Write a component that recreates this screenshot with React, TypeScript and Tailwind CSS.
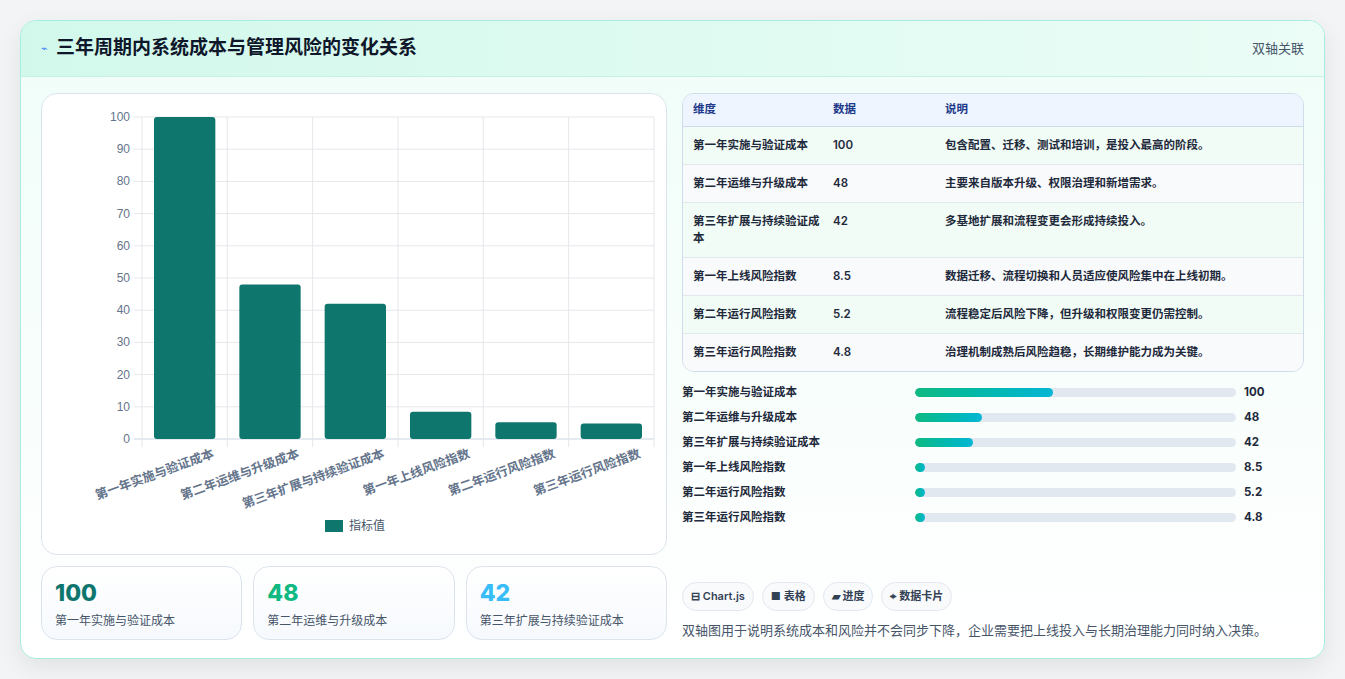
import React from "react";

const cats = ["第一年实施与验证成本","第二年运维与升级成本","第三年扩展与持续验证成本","第一年上线风险指数","第二年运行风险指数","第三年运行风险指数"];
const vals = [100,48,42,8.5,5.2,4.8];
const rows = [
  ["第一年实施与验证成本","100","包含配置、迁移、测试和培训，是投入最高的阶段。"],
  ["第二年运维与升级成本","48","主要来自版本升级、权限治理和新增需求。"],
  ["第三年扩展与持续验证成本","42","多基地扩展和流程变更会形成持续投入。"],
  ["第一年上线风险指数","8.5","数据迁移、流程切换和人员适应使风险集中在上线初期。"],
  ["第二年运行风险指数","5.2","流程稳定后风险下降，但升级和权限变更仍需控制。"],
  ["第三年运行风险指数","4.8","治理机制成熟后风险趋稳，长期维护能力成为关键。"],
];
const bars = [43,21,18,0,0,0];

function Chart() {
  const x0 = 100, x1 = 612, yTop = 23, yBot = 345;
  const w = (x1 - x0) / 6;
  return (
    <svg width="624" height="460" className="block" style={{ fontFamily: "Liberation Sans, 'Noto Sans CJK SC', sans-serif" }}>
      {[0,10,20,30,40,50,60,70,80,90,100].map((t) => {
        const y = yBot - (t / 100) * (yBot - yTop);
        return (
          <g key={t}>
            <line x1={x0 - 8} x2={x1} y1={y} y2={y} stroke={t === 0 ? "#cbd5e1" : "#e5e7eb"} />
            <text x={x0 - 12} y={y + 4} textAnchor="end" fontSize="12" fill="#64748b">{t}</text>
          </g>
        );
      })}
      {Array.from({ length: 7 }).map((_, i) => (
        <line key={i} x1={x0 + i * w} x2={x0 + i * w} y1={yTop} y2={yBot + 8} stroke="#e5e7eb" />
      ))}
      {vals.map((v, i) => {
        const h = (v / 100) * (yBot - yTop);
        return <rect key={i} x={x0 + i * w + 12} y={yBot - h} width={w - 24} height={h} rx="3" fill="#0f766e" />;
      })}
      {cats.map((c, i) => (
        <text key={i} transform={`translate(${x0 + i * w + w / 2 + 30},${yBot + 18}) rotate(-20)`} textAnchor="end" fontSize="12.5" fontWeight="700" fill="#64748b" style={{ fontFamily: "'Noto Sans CJK SC', sans-serif" }}>{c}</text>
      ))}
      <rect x="283" y="426" width="18" height="12" fill="#0f766e" />
      <text x="307" y="436" fontSize="12" fill="#475569" style={{ fontFamily: "'Noto Sans CJK SC', sans-serif" }}>指标值</text>
    </svg>
  );
}

export default function App() {
  return (
    <div className="min-h-[679px] bg-[#f3f4f6] p-5 pb-[22px]" style={{ fontFamily: "Inter, 'Noto Sans CJK SC', sans-serif" }}>
      <div className="rounded-2xl border border-[#a7ece0] bg-gradient-to-b from-[#effdf8] to-white shadow-[0_8px_24px_rgba(0,0,0,0.08)] overflow-hidden">
        <div className="h-14 flex items-center justify-between px-5 bg-gradient-to-r from-[#d2f8ec] to-[#ebfdf6] border-b border-[#c9f1e5]">
          <div className="flex items-center gap-2">
            <span className="text-[#3b82f6] text-[11px]">⌁</span>
            <h1 className="text-[19px] font-bold text-[#0f172a]">三年周期内系统成本与管理风险的变化关系</h1>
          </div>
          <span className="text-[13px] text-[#475569]">双轴关联</span>
        </div>
        <div className="flex gap-[15px] px-5 pt-4 pb-[18px]">
          <div className="w-[626px] flex flex-col gap-[11px]">
            <div className="h-[462px] rounded-2xl border border-[#dbe4ee] bg-white">
              <Chart />
            </div>
            <div className="grid grid-cols-3 gap-[11px]">
              {[["100","#0f766e","第一年实施与验证成本"],["48","#10b981","第二年运维与升级成本"],["42","#38bdf8","第三年扩展与持续验证成本"]].map(([n,c,l]) => (
                <div key={l} className="h-[74px] rounded-2xl border border-[#dbe4ee] bg-gradient-to-b from-white to-[#f6f9fd] px-[13px] pt-[12px]">
                  <div className="text-[23px] font-extrabold leading-[28px]" style={{ color: c }}>{n}</div>
                  <div className="text-[12px] text-[#475569] mt-[5px]">{l}</div>
                </div>
              ))}
            </div>
          </div>
          <div className="flex-1 flex flex-col">
            <div className="rounded-xl border border-[#cfdcea] overflow-hidden text-[11.5px] font-semibold text-[#1e293b]">
              <div className="flex h-[33px] items-center bg-[#eef5fe] border-b border-[#cfdcea] text-[#1e3a8a]">
                <div className="w-[150px] pl-[10px]">维度</div><div className="w-[112px]">数据</div><div>说明</div>
              </div>
              {rows.map((r, i) => (
                <div key={i} className={`flex items-start border-b last:border-b-0 border-[#e2e8f0] py-[10px] ${i % 2 === 0 ? "bg-[#f1fcf6]" : "bg-[#f8fafc]"}`}>
                  <div className="w-[150px] pl-[10px] pr-3 leading-[17px]">{r[0]}</div>
                  <div className="w-[112px] leading-[17px]">{r[1]}</div>
                  <div className="leading-[17px]">{r[2]}</div>
                </div>
              ))}
            </div>
            <div className="flex flex-col gap-[8px] mt-[12px]">
              {rows.map((r, i) => (
                <div key={i} className="flex items-center h-[17px] text-[11.5px] font-semibold text-[#1e293b]">
                  <div className="w-[233px]">{r[0]}</div>
                  <div className="w-[321px] h-[9px] rounded-full bg-[#e2e8f0] overflow-hidden">
                    <div className="h-full rounded-full bg-gradient-to-r from-[#10b981] to-[#06b6d4] min-w-[10px]" style={{ width: `${bars[i]}%` }} />
                  </div>
                  <div className="ml-[8px] font-bold">{r[1]}</div>
                </div>
              ))}
            </div>
            <div className="mt-auto flex gap-[8px]">
              {["⊟ Chart.js","■ 表格","▰ 进度","⌖ 数据卡片"].map((t) => (
                <span key={t} className="h-[29px] flex items-center px-[8px] rounded-full border border-[#e2e8f0] bg-[#f8fafc] text-[11px] font-semibold text-[#334155]">{t}</span>
              ))}
            </div>
            <p className="mt-[10px] text-[13px] text-[#475569]">双轴图用于说明系统成本和风险并不会同步下降，企业需要把上线投入与长期治理能力同时纳入决策。</p>
          </div>
        </div>
      </div>
    </div>
  );
}
